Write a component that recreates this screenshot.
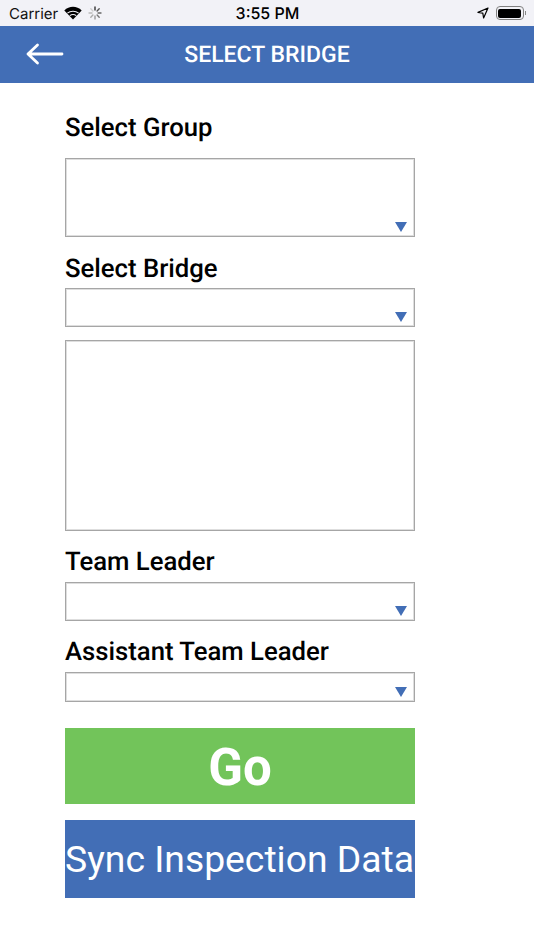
<div class="screen">
  <div class="status">
    <div class="st-left">
      <span class="carrier">Carrier</span>
      <svg class="wifi" width="20" height="14" viewBox="0 0 19 14">
        <path d="M9.5 13.5 L0.8 4.6 C5.6 -0.4 13.4 -0.4 18.2 4.6 Z" fill="#000"/>
        <path d="M3.9 7.2 C7 4.6 12 4.6 15.1 7.2 M6.3 9.6 C8 8.4 11 8.4 12.7 9.6" stroke="#f2f2f7" stroke-width="1.1" fill="none"/>
      </svg>
      <svg class="spin" width="14" height="14" viewBox="0 0 14 14" stroke-linecap="round" stroke-width="1.4">
        <path d="M7 1v3" stroke="#333"/>
        <path d="M11.2 2.8 9.1 4.9" stroke="#555"/>
        <path d="M13 7h-3" stroke="#666"/>
        <path d="M11.2 11.2 9.1 9.1" stroke="#777"/>
        <path d="M7 13v-3" stroke="#999"/>
        <path d="M2.8 11.2 4.9 9.1" stroke="#aaa"/>
        <path d="M1 7h3" stroke="#bbb"/>
        <path d="M2.8 2.8 4.9 4.9" stroke="#ccc"/>
      </svg>
    </div>
    <span class="time">3:55 PM</span>
    <div class="st-right">
      <svg class="loc" width="12" height="12" viewBox="0 0 12 12">
        <path d="M11 1 L1 5.4 L5.8 6.2 L6.6 11 Z" fill="none" stroke="#000" stroke-width="1.2" stroke-linejoin="round"/>
      </svg>
      <div class="battery"><div class="fill"></div></div>
      <div class="nub"></div>
    </div>
  </div>

  <header class="bar">
    <svg class="back" width="38" height="22" viewBox="0 0 38 22">
      <path d="M2 11 H36 M11.5 2 L2 11 L11.5 20" fill="none" stroke="#fff" stroke-width="2.8" stroke-linecap="round" stroke-linejoin="round"/>
    </svg>
    <h1>SELECT BRIDGE</h1>
  </header>

  <main class="form">
    <div class="label l-group">Select Group</div>
    <div class="select s-group"><span class="arrow"></span></div>
    <div class="label l-bridge">Select Bridge</div>
    <div class="select s-bridge"><span class="arrow"></span></div>
    <div class="box"></div>
    <div class="label l-leader">Team Leader</div>
    <div class="select s-leader"><span class="arrow"></span></div>
    <div class="label l-assist">Assistant Team Leader</div>
    <div class="select s-assist"><span class="arrow"></span></div>
    <button class="go"><span>Go</span></button>
    <button class="sync">Sync Inspection Data</button>
  </main>
</div>

<style>
  :global(body) {
    margin: 0;
    background: #fff;
  }
  .screen {
    width: 534px;
    height: 950px;
    overflow: hidden;
    background: #fff;
    font-family: Roboto, "Liberation Sans", sans-serif;
    text-rendering: geometricPrecision;
  }
  .status {
    height: 26px;
    background: #f2f2f7;
    display: grid;
    grid-template-columns: 1fr auto 1fr;
    align-items: center;
    padding: 0 8px 0 9px;
    box-sizing: border-box;
    color: #000;
    font-family: "Inter", "Liberation Sans", sans-serif;
  }
  .st-left {
    display: flex;
    align-items: center;
    gap: 5px;
  }
  .carrier {
    font-size: 15px;
    color: #111;
    margin-right: 1px;
  }
  .wifi { margin-bottom: 1px; margin-left: -1px; }
  .time {
    font-weight: 500;
    font-size: 16px;
  }
  .st-right {
    display: flex;
    align-items: center;
    justify-content: flex-end;
  }
  .loc { margin-right: 7px; }
  .battery {
    width: 28px;
    height: 14px;
    border: 1px solid #808080;
    border-radius: 4px;
    box-sizing: border-box;
    padding: 1.5px;
    display: flex;
  }
  .fill {
    flex: 1;
    background: #000;
    border-radius: 2px;
  }
  .nub {
    width: 1.5px;
    height: 4px;
    background: #888;
    margin-left: 1px;
  }
  .bar {
    height: 57px;
    background: #426eb6;
    position: relative;
    display: flex;
    align-items: center;
    justify-content: center;
  }
  .back {
    position: absolute;
    left: 26px;
    top: 17px;
  }
  h1 {
    margin: -1px 0 0;
    color: #fff;
    font-size: 23px;
    font-weight: 500;
  }
  .form {
    width: 350px;
    margin-left: 65px;
    display: flex;
    flex-direction: column;
    color: #000;
  }
  .label {
    font-size: 25.7px;
    font-weight: 500;
    line-height: 30px;
    height: 30px;
  }
  .l-group { margin-top: 30px; }
  .l-bridge { margin-top: 17px; }
  .l-leader { margin-top: 16px; }
  .l-assist { margin-top: 16px; }
  .select, .box {
    box-sizing: border-box;
    border: 1px solid #a6a6a6;
    box-shadow: inset 0 0 0 1px #dedede;
    position: relative;
    width: 350px;
    background: #fff;
  }
  .s-group { height: 79px; margin-top: 15px; }
  .s-bridge { height: 39px; margin-top: 4px; }
  .s-leader { height: 39px; margin-top: 5px; }
  .s-assist { height: 30px; margin-top: 5px; }
  .box { height: 191px; margin-top: 13px; }
  .arrow {
    position: absolute;
    right: 7px;
    bottom: 4px;
    width: 0;
    height: 0;
    border-left: 6.5px solid transparent;
    border-right: 6.5px solid transparent;
    border-top: 10px solid #426eb6;
  }
  button {
    display: block;
    width: 350px;
    border: 0;
    color: #fff;
    font-family: inherit;
  }
  .go {
    height: 76px;
    margin-top: 26px;
    background: #72c45a;
    font-size: 51px;
    font-weight: 700;
    padding: 2px 0 0;
  }
  .sync {
    height: 78px;
    margin-top: 16px;
    background: #426eb6;
    font-size: 37.3px;
    font-weight: 400;
    white-space: nowrap;
    padding: 0 1px 0 0;
  }
</style>
